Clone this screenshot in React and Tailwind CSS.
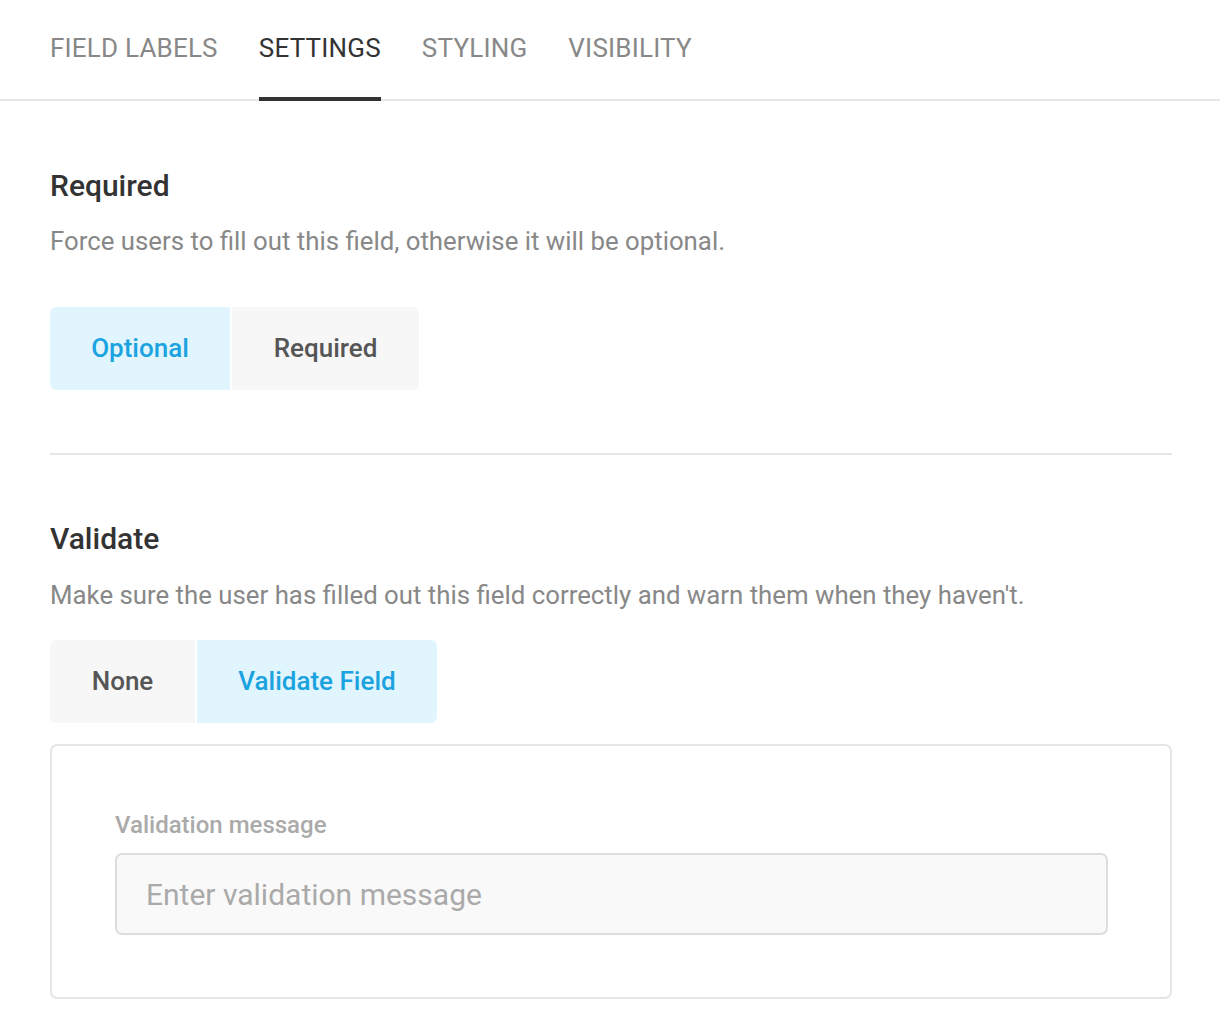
import React from "react";

export default function App() {
  const tabs = ["FIELD LABELS", "SETTINGS", "STYLING", "VISIBILITY"];
  return (
    <div className="w-[1220px] h-[1028px] bg-white overflow-hidden" style={{ fontFamily: "Roboto, 'Noto Sans', sans-serif" }}>
      <div className="flex gap-[41px] pl-[50px] border-b-2 border-[#e5e5e5]">
        {tabs.map((t, i) => (
          <div
            key={t}
            className={
              "h-[101px] -mb-[2px] pt-[33px] text-[26px] leading-[30px] tracking-[0.2px] border-b-[4px] " +
              (i === 1 ? "text-[#333333] border-[#333333]" : "text-[#888888] border-transparent")
            }
          >
            {t}
          </div>
        ))}
      </div>

      <div className="w-[1172px] pl-[50px]">
        <div className="pt-[67px]">
          <h2 className="text-[30px] font-medium text-[#333333] leading-[36px]">Required</h2>
          <p className="mt-[22px] text-[25.8px] text-[#888888] leading-[30px]">
            Force users to fill out this field, otherwise it will be optional.
          </p>
          <div className="mt-[51px] flex gap-[2px]">
            <button className="w-[180px] h-[83px] rounded-l-[6px] bg-[#e1f5fe] text-[#1ba3e0] text-[26px] font-medium">
              Optional
            </button>
            <button className="w-[187px] h-[83px] rounded-r-[6px] bg-[#f7f7f7] text-[#555555] text-[26px] font-medium">
              Required
            </button>
          </div>
        </div>

        <div className="mt-[63px] border-t-2 border-[#e5e5e5]" />

        <div className="pt-[66px]">
          <h2 className="text-[30px] font-medium text-[#333333] leading-[36px]">Validate</h2>
          <p className="mt-[23px] text-[25.8px] text-[#888888] leading-[30px]">
            Make sure the user has filled out this field correctly and warn them when they haven't.
          </p>
          <div className="mt-[30px] flex gap-[2px]">
            <button className="w-[145px] h-[83px] rounded-l-[6px] bg-[#f7f7f7] text-[#555555] text-[26px] font-medium">
              None
            </button>
            <button className="w-[240px] h-[83px] rounded-r-[6px] bg-[#e1f5fe] text-[#1ba3e0] text-[26px] font-medium">
              Validate Field
            </button>
          </div>
          <div className="mt-[21px] border-2 border-[#e5e5e5] rounded-[7px] h-[255px] pt-[65px] pl-[63px] pr-[62px]">
            <label className="block text-[24px] font-medium text-[#aaaaaa] leading-[28px]">Validation message</label>
            <div className="mt-[14px] h-[82px] bg-[#f9f9f9] border-2 border-[#dddddd] rounded-[7px] flex items-center pl-[29px] text-[30px] text-[#aaaaaa]">
              Enter validation message
            </div>
          </div>
        </div>
      </div>
    </div>
  );
}
